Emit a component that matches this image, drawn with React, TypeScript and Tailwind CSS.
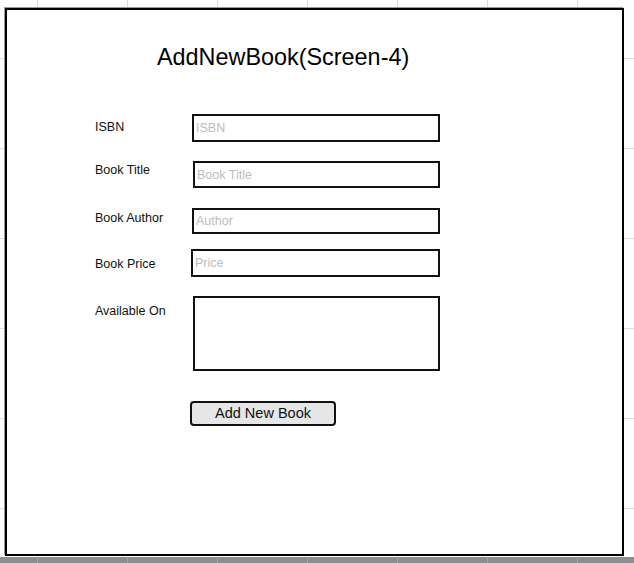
import React from "react";

const field = "h-full w-full border-2 border-[#111] bg-white px-[2px] text-[12.5px] leading-[15px] text-black outline-none placeholder:text-[#bdbdbd]";

function Row({
  label,
  labelTop,
  children,
  className,
}: {
  label: string;
  labelTop: string;
  children: React.ReactNode;
  className: string;
}) {
  return (
    <div className={`flex items-start ${className}`}>
      <span className={`w-[97px] shrink-0 pl-[88px] box-content text-[12.5px] leading-[15px] text-[#111] ${labelTop}`}>
        {label}
      </span>
      {children}
    </div>
  );
}

export default function App() {
  return (
    <div className="relative flex h-[563px] w-[634px] flex-col overflow-hidden bg-white bg-[linear-gradient(to_right,#dcdcdc_1px,transparent_1px),linear-gradient(to_bottom,#dcdcdc_1px,transparent_1px)] bg-[size:90px_90px] bg-[position:37px_58px] font-['Liberation_Sans',Arial,sans-serif]">
      {/* Screen frame */}
      <div className="ml-[5px] mt-[8px] h-[548px] w-[619px] shrink-0 border-2 border-black bg-white shadow-[-1px_-1px_0_#9a9a9a]">
        <h1 className="ml-[150px] mt-[34px] text-[23.4px] leading-[26px] text-black">AddNewBook(Screen-4)</h1>

        <div className="flex flex-col">
          <Row label="ISBN" labelTop="mt-[6px]" className="mt-[44px]">
            <div className="h-[28px] w-[248px]">
              <input className={field} placeholder="ISBN" />
            </div>
          </Row>

          <Row label="Book Title" labelTop="mt-[2px]" className="mt-[19px]">
            <div className="ml-[1px] h-[27px] w-[247px]">
              <input className={field} placeholder="Book Title" />
            </div>
          </Row>

          <Row label="Book Author" labelTop="mt-[3px]" className="mt-[20px]">
            <div className="h-[26px] w-[248px]">
              <input className={field} placeholder="Author" />
            </div>
          </Row>

          <Row label="Book Price" labelTop="mt-[8px]" className="mt-[15px]">
            <div className="-ml-[1px] h-[28px] w-[249px]">
              <input className={field} placeholder="Price" />
            </div>
          </Row>

          <Row label="Available On" labelTop="mt-[8px]" className="mt-[19px]">
            <div className="ml-[1px] h-[75px] w-[247px]">
              <textarea className={`${field} resize-none`} />
            </div>
          </Row>
        </div>

        <button className="ml-[183px] mt-[30px] flex h-[25px] w-[146px] items-center justify-center rounded-[4px] border-2 border-[#111] bg-[#e6e6e6] text-[14.5px] leading-[17px] text-[#111]">
          Add New Book
        </button>
      </div>

      {/* Bottom scroll strip */}
      <div className="mt-[1px] h-[6px] w-full shrink-0 bg-[#8e8e8e] bg-[linear-gradient(to_right,#a4a4a4_1px,transparent_1px)] bg-[size:90px_6px] bg-[position:37px_0]" />
    </div>
  );
}
